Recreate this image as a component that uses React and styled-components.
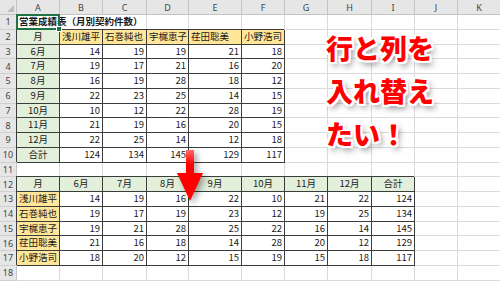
import React from "react";
import styled, { createGlobalStyle } from "styled-components";

const COLS = ["A", "B", "C", "D", "E", "F", "G", "H", "I", "J", "K"];
const WIDTHS = [43, 43, 44, 42, 53, 43, 43, 44, 43, 43, 43];
const ROW_COUNT = 18;

const GREEN = "#e2efda";
const YELLOW = "#ffe699";
const LINE = "#3c3c3c";

const members = ["浅川雄平", "石巻純也", "宇梶恵子", "荏田聡美", "小野浩司"];
const months = ["6月", "7月", "8月", "9月", "10月", "11月", "12月"];
const counts = [
    [14, 19, 19, 21, 18],
    [19, 17, 21, 16, 20],
    [16, 19, 28, 18, 12],
    [22, 23, 25, 14, 15],
    [10, 12, 22, 28, 19],
    [21, 19, 16, 20, 15],
    [22, 25, 14, 12, 18],
];
const totals = members.map((_, i) => counts.reduce((s, r) => s + r[i], 0));

// builds an 18 x 11 matrix of cell specs
function buildRows() {
    const rows = [];
    for (let r = 0; r < ROW_COUNT; r++) rows.push(COLS.map(() => ({})));

    rows[0][0] = { text: "営業成績表（月別契約件数）", bold: true, selected: true, flowing: true };
    rows[0][1] = { flowing: true };

    // original table
    rows[1][0] = { text: "月", align: "center", fill: GREEN, boxed: true };
    members.forEach((m, i) => {
        rows[1][i + 1] = { text: m, fill: YELLOW, boxed: true };
    });
    months.forEach((mo, r) => {
        rows[r + 2][0] = { text: mo, align: "center", fill: GREEN, boxed: true };
        counts[r].forEach((v, c) => {
            rows[r + 2][c + 1] = { text: v, align: "right", boxed: true };
        });
    });
    rows[9][0] = { text: "合計", align: "center", fill: GREEN, boxed: true };
    totals.forEach((v, c) => {
        rows[9][c + 1] = { text: v, align: "right", boxed: true };
    });

    // transposed table
    rows[11][0] = { text: "月", align: "center", fill: GREEN, boxed: true };
    months.forEach((mo, i) => {
        rows[11][i + 1] = { text: mo, align: "center", fill: GREEN, boxed: true };
    });
    rows[11][8] = { text: "合計", align: "center", fill: GREEN, boxed: true };
    members.forEach((m, r) => {
        rows[12 + r][0] = { text: m, fill: YELLOW, boxed: true };
        months.forEach((_, c) => {
            rows[12 + r][c + 1] = { text: counts[c][r], align: "right", boxed: true };
        });
        rows[12 + r][8] = { text: totals[r], align: "right", boxed: true };
    });

    return rows;
}

function App() {
    const rows = buildRows();

    return (
        <>
            <GlobalStyle />
            <Sheet>
                <Corner />
                {COLS.map((c) => (
                    <ColHead key={c}>{c}</ColHead>
                ))}
                {rows.map((row, r) => (
                    <React.Fragment key={r}>
                        <RowHead>{r + 1}</RowHead>
                        {row.map((cell, c) => {
                            const Comp = cell.selected ? SelectedCell : Cell;
                            return (
                                <Comp
                                    key={c}
                                    $align={cell.align}
                                    $fill={cell.fill}
                                    $boxed={cell.boxed}
                                    $bold={cell.bold}
                                    $flowing={cell.flowing}
                                >
                                    {cell.text}
                                </Comp>
                            );
                        })}
                    </React.Fragment>
                ))}

                <Callout>
                    <CalloutLine>行と列を</CalloutLine>
                    <CalloutLine>入れ替え</CalloutLine>
                    <CalloutLine>たい！</CalloutLine>
                </Callout>

                <DownArrow width="40" height="65" viewBox="0 0 40 65">
                    <defs>
                        <linearGradient id="shaft" x1="0" y1="0" x2="0" y2="1">
                            <stop offset="0" stopColor="#ff6a6a" />
                            <stop offset="0.55" stopColor="#ff0000" />
                        </linearGradient>
                    </defs>
                    <rect x="16" y="5" width="8" height="26" fill="url(#shaft)" />
                    <polygon points="7,28 33,28 20,56" fill="#ff0000" />
                </DownArrow>
            </Sheet>
        </>
    );
}

const GlobalStyle = createGlobalStyle`
    html, body {
        margin: 0;
        padding: 0;
        background: #fff;
    }
    body {
        width: 500px;
        height: 282px;
        overflow: hidden;
        font-family: "Noto Sans CJK JP", "Noto Sans", sans-serif;
    }
`;

const Sheet = styled.div`
    position: relative;
    display: grid;
    grid-template-columns: 17px ${WIDTHS.map((w) => w + "px").join(" ")};
    grid-template-rows: 15px;
    grid-auto-rows: 14.75px;
    width: 500px;
    height: 282px;
    overflow: hidden;
    background: #fff;
    font-family: "Noto Sans CJK JP", "Noto Sans", sans-serif;
    font-size: 9.5px;
    color: #1a1a1a;
`;

const Corner = styled.div`
    position: relative;
    background: #e6e6e6;
    border-right: 1px solid #c4c4c4;
    border-bottom: 1px solid #c4c4c4;
    &::after {
        content: "";
        position: absolute;
        right: 2px;
        bottom: 2px;
        border-left: 7px solid transparent;
        border-bottom: 7px solid #bdbdbd;
    }
`;

const ColHead = styled.div`
    display: flex;
    align-items: center;
    justify-content: center;
    background: #e6e6e6;
    border-right: 1px solid #c4c4c4;
    border-bottom: 1px solid #c4c4c4;
    font-family: "Noto Sans", "Liberation Sans", sans-serif;
    font-size: 9px;
    color: #444;
`;

const RowHead = styled.div`
    display: flex;
    align-items: center;
    justify-content: center;
    background: #e6e6e6;
    border-right: 1px solid #c4c4c4;
    border-bottom: 1px solid #d0d0d0;
    font-family: "Noto Sans", "Liberation Sans", sans-serif;
    font-size: 9px;
    color: #444;
`;

const Cell = styled.div`
    position: relative;
    display: flex;
    align-items: center;
    justify-content: ${(p) =>
        p.$align === "right" ? "flex-end" : p.$align === "center" ? "center" : "flex-start"};
    padding: 0 2px;
    min-width: 0;
    background: ${(p) => p.$fill || "transparent"};
    border-right: 1px solid
        ${(p) => (p.$boxed ? LINE : p.$flowing ? "transparent" : "#dadada")};
    border-bottom: 1px solid ${(p) => (p.$boxed ? LINE : "#dadada")};
    box-shadow: ${(p) => (p.$boxed ? `-1px -1px 0 ${LINE}` : "none")};
    white-space: nowrap;
    font-weight: ${(p) => (p.$bold ? 700 : 400)};
    line-height: 1;
`;

const SelectedCell = styled(Cell)`
    &::after {
        content: "";
        position: absolute;
        left: -1px;
        top: -1px;
        right: -1px;
        bottom: -1px;
        border: 2px solid #217346;
        z-index: 3;
        pointer-events: none;
    }
    &::before {
        content: "";
        position: absolute;
        right: -3px;
        bottom: -3px;
        width: 4px;
        height: 4px;
        background: #217346;
        border: 1px solid #fff;
        z-index: 4;
    }
`;

const Callout = styled.div`
    position: absolute;
    left: 326px;
    top: 26px;
    z-index: 5;
    color: #ff0000;
    font-family: "Noto Sans CJK JP", sans-serif;
    font-weight: 900;
    font-size: 27px;
    line-height: 43px;
    white-space: nowrap;
    text-shadow: -2px -2px 0 #fff, 2px -2px 0 #fff, -2px 2px 0 #fff, 2px 2px 0 #fff,
        0 -2px 0 #fff, 0 2px 0 #fff, -2px 0 0 #fff, 2px 0 0 #fff,
        3px 4px 6px rgba(0, 0, 0, 0.5);
`;

const CalloutLine = styled.div``;

const DownArrow = styled.svg`
    position: absolute;
    left: 170px;
    top: 145px;
    z-index: 5;
    filter: drop-shadow(3px 3px 3px rgba(0, 0, 0, 0.35));
`;

export default App;
